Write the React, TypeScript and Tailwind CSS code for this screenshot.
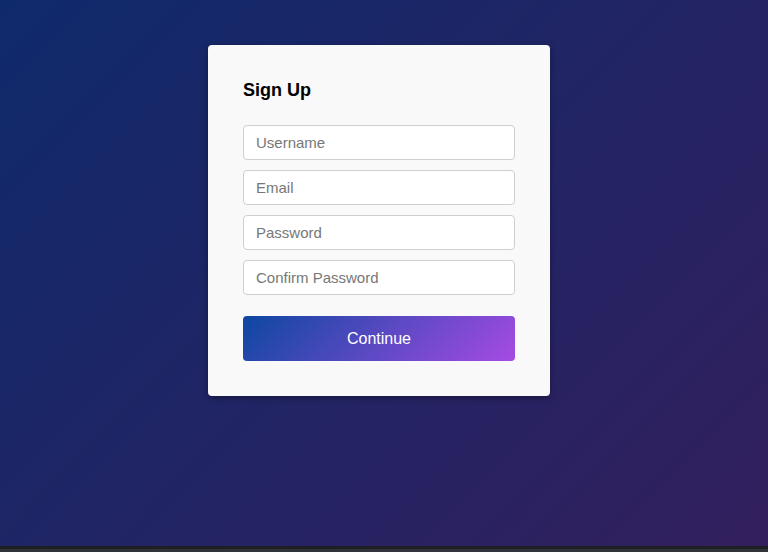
import React from 'react';

const fields = ['Username', 'Email', 'Password', 'Confirm Password'];

export default function App() {
  return (
    <div className="flex h-[552px] w-full flex-col overflow-hidden font-['Liberation_Sans',Arial,sans-serif]">
      {/* page */}
      <main className="flex flex-1 justify-center bg-linear-135/srgb from-[#0f2a6b] to-[#331f5e] pt-[45px] pr-[10px]">
        <div className="h-[351px] w-[342px] rounded-[4px] bg-[#f9f9f9] p-[35px] shadow-[0_2px_6px_rgba(0,0,0,0.35)]">
          <h2 className="mb-[24px] text-[18px] leading-[21px] font-bold text-black">Sign Up</h2>

          <form className="flex flex-col gap-[10px]" onSubmit={(e) => e.preventDefault()}>
            {fields.map((f) => (
              <input
                key={f}
                type={f.includes('Password') ? 'password' : 'text'}
                placeholder={f}
                className="h-[35px] w-full rounded-[4px] border border-[#cfcfcf] bg-white px-[12px] text-[15px] text-[#333] outline-none placeholder:text-[#777]"
              />
            ))}

            <button
              type="submit"
              className="mt-[11px] h-[45px] w-full rounded-[4px] bg-linear-135/srgb from-[#0d47a1] to-[#a64be3] text-[16px] text-white"
            >
              Continue
            </button>
          </form>
        </div>
      </main>

      {/* bottom bar */}
      <div className="h-[3px] bg-[#1e1f22]" />
      <div className="h-[3px] bg-[#30343a]" />
    </div>
  );
}
